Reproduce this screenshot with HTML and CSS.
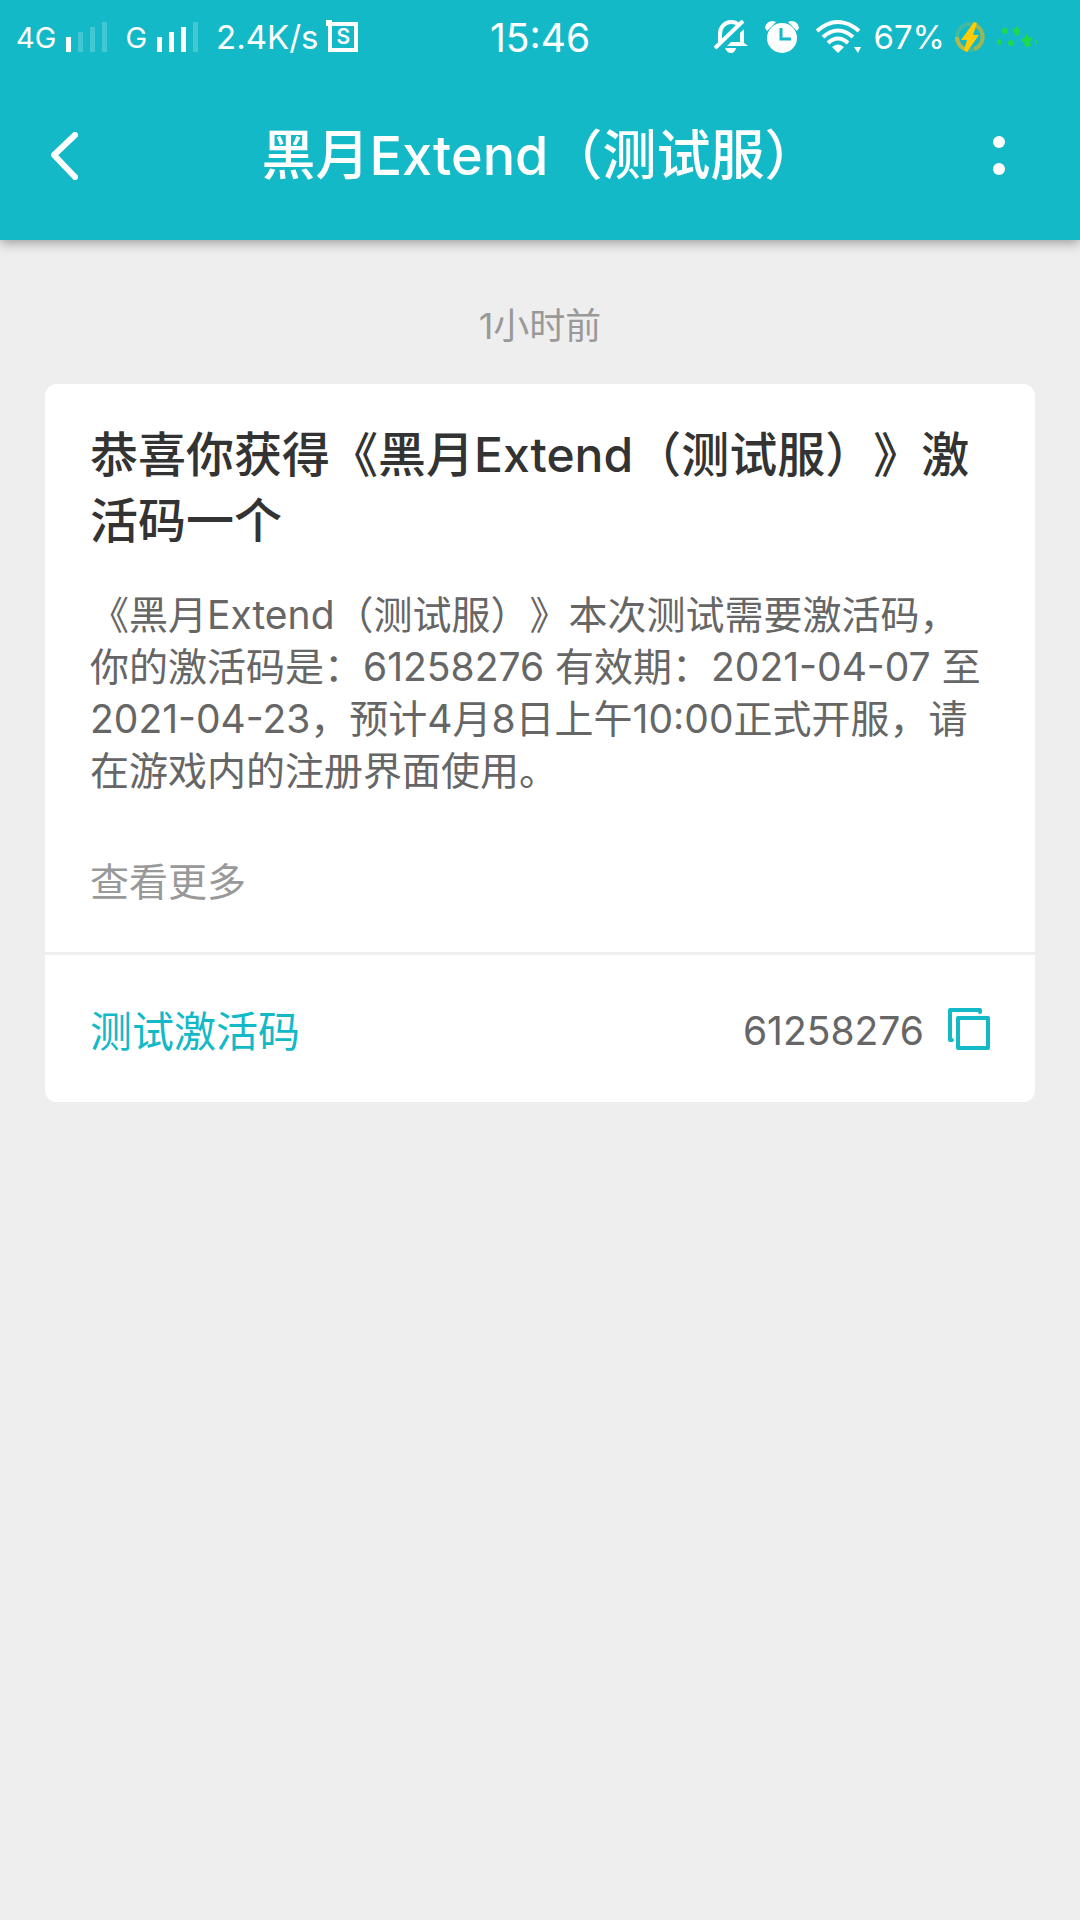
FILE: index.html
```html
<!DOCTYPE html>
<html lang="zh-CN">
<head>
  <meta charset="UTF-8" />
  <meta name="viewport" content="width=device-width, initial-scale=1" />
  <title>黑月Extend（测试服）</title>
  <link rel="stylesheet" href="styles.css">
</head>
<body>
  <header class="top">
    <div class="status">
      <div class="status-left">
        <span class="net">4G</span>
        <svg class="signal" width="41" height="30" viewBox="0 0 41 30" fill="#fff">
          <path d="M0 15h5v15H0z"/>
          <path d="M12 10h5v20h-5zM24 5h5v25h-5zM36 0h5v30h-5z" opacity=".2"/>
        </svg>
        <span class="net">G</span>
        <svg class="signal" width="41" height="30" viewBox="0 0 41 30" fill="#fff">
          <path d="M0 15h5v15H0zM12 10h5v20h-5zM24 5h5v25h-5z"/>
          <path d="M36 0h5v30h-5z" opacity=".2"/>
        </svg>
        <span class="speed">2.4K/s</span>
        <span class="badge-s">S</span>
      </div>
      <div class="clock">15:46</div>
      <div class="status-right">
        <svg width="34" height="34" viewBox="0 0 34 34">
          <path d="M6 22V14C6 7 11 2 17 2s11 4 11 11v10" fill="none" stroke="#fff" stroke-width="4"/>
          <path d="M10 26l4-4h15l5 4zM11 28h11q-1 5-5 5t-6-5z" fill="#fff"/>
          <path d="M4 30L31 3" stroke="#14b9c8" stroke-width="7"/>
          <path d="M1 28L29 1" stroke="#fff" stroke-width="4"/>
        </svg>
        <svg width="34" height="34" viewBox="0 0 34 34">
          <path d="M0 8q1-7 8-7l3 1-9 9zM34 8q-1-7-8-7l-3 1 9 9z" fill="#fff"/>
          <circle cx="17" cy="18" r="15" fill="#fff"/>
          <path d="M16 8v11h10" fill="none" stroke="#14b9c8" stroke-width="3"/>
        </svg>
        <svg class="wifi" width="45" height="34" viewBox="0 0 45 34">
          <g fill="none" stroke="#fff" stroke-width="4">
            <path d="M1 11Q22-7 43 11"/>
            <path d="M7 17Q22 4 37 17"/>
            <path d="M12 23Q22 14 32 23"/>
          </g>
          <path d="M16 27q6-5 12 0l-6 6zM38 27h7l-3 6z" fill="#fff"/>
        </svg>
        <span class="percent">67%</span>
        <svg class="power" width="30" height="30" viewBox="0 0 30 30">
          <circle cx="15" cy="15" r="13" fill="none" stroke="#3fbba0" stroke-width="4"/>
          <path d="M20 3A13 13 0 0 1 19 27" fill="none" stroke="#9cb656" stroke-width="4"/>
          <path d="M2 15A13 13 0 0 0 13 28" fill="none" stroke="#b5b94a" stroke-width="4"/>
          <path d="M19 0L6 18h6L9 28l3 2 12-17h-6l4-12z" fill="#fc0"/>
        </svg>
        <svg class="dots" width="41" height="22" viewBox="0 0 41 22" fill="#1fd94c">
          <ellipse cx="8" cy="5" rx="3" ry="3"/>
          <path d="M15 2l3 1 2-3 2 3 1 3-2 4-3-1-1-3z"/>
          <ellipse cx="2" cy="16" rx="2" ry="3"/>
          <circle cx="14" cy="17" r="3"/>
          <path d="M29 7l2 4 5 1-3 4 1 4-5 1-2-4-3-3 4-3z"/>
          <ellipse cx="39" cy="16" rx="1" ry="2"/>
        </svg>
      </div>
    </div>
    <div class="bar">
      <button class="icon-btn" type="button" aria-label="返回">
        <svg width="27" height="48" viewBox="0 0 27 48" fill="none" stroke="#fff" stroke-width="6" stroke-linecap="round" stroke-linejoin="round">
          <path d="M24 3L3 23l21 22"/>
        </svg>
      </button>
      <h1>黑月Extend（测试服）</h1>
      <button class="icon-btn more" type="button" aria-label="更多">
        <svg width="12" height="40" viewBox="0 0 12 40" fill="#fff">
          <circle cx="6" cy="6" r="6"/>
          <circle cx="6" cy="33" r="6"/>
        </svg>
      </button>
    </div>
  </header>

  <main>
    <p class="time">1小时前</p>

    <article class="card">
      <div class="card-body">
        <h2>恭喜你获得《黑月Extend（测试服）》激活码一个</h2>
        <p class="text">《黑月Extend（测试服）》本次测试需要激活码，你的激活码是：61258276 有效期：2021-04-07 至 2021-04-23，预计4月8日上午10:00正式开服，请在游戏内的注册界面使用。</p>
        <a class="see-more" href="#">查看更多</a>
      </div>
      <div class="card-code">
        <span class="code-label">测试激活码</span>
        <span class="code">61258276</span>
        <button class="copy" type="button" aria-label="复制">
          <svg width="42" height="42" viewBox="0 0 42 42" fill="none" stroke="#14b9c8" stroke-width="4" stroke-linecap="round" stroke-linejoin="round">
            <path d="M4 32H2V2h30v2"/>
            <path d="M10 10h30v30H10z"/>
          </svg>
        </button>
      </div>
    </article>
  </main>
</body>
</html>
```
FILE: styles.css
```css
* { box-sizing: border-box; }
body { margin: 0; min-height: 100vh; background: #eee; color: #666; font-family: Inter, "Noto Sans CJK SC", sans-serif; font-weight: 400; text-spacing-trim: space-all; }
h1, h2, p { margin: 0; }
button { padding: 0; border: none; background: none; cursor: pointer; }
svg { display: block; flex: none; }

.top { background: #14b9c8; color: #fff; box-shadow: 0 2px 12px rgba(0, 0, 0, 0.4); }

/* status bar */
.status { display: grid; grid-template-columns: 1fr auto 1fr; align-items: center; height: 72px; padding: 2px 16px 0; }
.status-left, .status-right { display: flex; align-items: center; }
.status-right { justify-content: flex-end; padding-right: 26px; }
.net { font-size: 29px; }
.signal { margin: 0 18px 0 10px; }
.speed { font-size: 33px; }
.badge-s { position: relative; width: 30px; height: 30px; margin-left: 10px; border: 4px solid #fff; font-size: 21px; font-weight: 600; line-height: 22px; text-align: center; }
.badge-s::before { content: ""; position: absolute; top: -6px; left: -6px; width: 6px; height: 6px; background: #fff; }
.clock { font-size: 39px; }
.status-right svg { margin-right: 17px; }
.status-right .wifi, .status-right .power { margin-right: 12px; }
.status-right .dots { margin-right: 0; }
.percent { margin-right: 10px; font-size: 33px; }

/* title bar */
.bar { display: flex; align-items: center; justify-content: space-between; height: 168px; padding: 0 51px; }
.icon-btn { display: flex; align-items: center; width: 60px; height: 90px; }
.more { justify-content: flex-end; padding-right: 24px; }
h1 { font-size: 54px; font-weight: 500; line-height: 72px; }

.time { padding: 60px 0 32px; font-size: 36px; line-height: 52px; text-align: center; color: #999; }

/* message card */
.card { margin: 0 45px; border-radius: 12px; background: #fff; }
.card-body { padding: 38px 45px 44px; border-bottom: 3px solid #eee; }
h2 { margin-bottom: 35px; font-size: 48px; font-weight: 500; line-height: 66px; color: #333; }
.text { font-size: 39px; line-height: 52px; }
.see-more { display: block; margin-top: 59px; font-size: 39px; line-height: 52px; color: #999; text-decoration: none; }
.card-code { display: flex; align-items: center; height: 147px; padding: 0 45px; }
.code-label { margin-right: auto; font-size: 42px; color: #14b9c8; }
.code { padding-top: 4px; font-size: 39px; }
.copy { margin-left: 24px; }
```
